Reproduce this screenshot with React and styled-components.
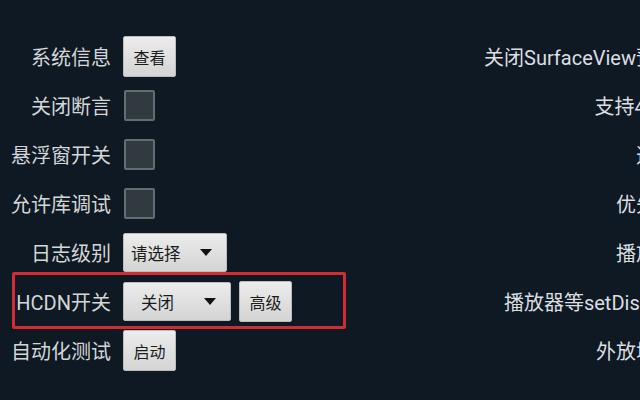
import React from "react";
import styled, { createGlobalStyle } from "styled-components";

const Global = createGlobalStyle`
  html, body { margin: 0; padding: 0; background: #0e1923; overflow: hidden; }
  body { font-family: Roboto, "Noto Sans CJK SC", sans-serif; }
`;

const Screen = styled.div`
  width: 640px;
  height: 400px;
  overflow: hidden;
  background: #0e1923;
`;

const Columns = styled.div`
  width: 696px;
  display: grid;
  grid-template-columns: 360px 1fr;
  padding-top: 32px;
`;

const Panel = styled.div`
  display: flex;
  flex-direction: column;
`;

const Row = styled.div`
  position: relative;
  height: 49px;
  display: flex;
  align-items: center;
  gap: 8px;
  ${(p) =>
    p.$highlight &&
    `
    &::after {
      content: "";
      position: absolute;
      left: 12px;
      top: -5px;
      width: 328px;
      height: 51px;
      border: 3px solid #d42a31;
      border-radius: 2px;
      pointer-events: none;
    }
  `}
`;

const Label = styled.span`
  width: 111px;
  margin-right: 4px;
  text-align: right;
  font-size: 20px;
  color: #d4d6d8;
  white-space: nowrap;
`;

const Button = styled.div`
  box-sizing: border-box;
  width: 53px;
  height: 41px;
  display: flex;
  align-items: center;
  justify-content: center;
  background: linear-gradient(#ececec, #d4d4d4);
  border: 1px solid #bcbcbc;
  border-radius: 2px;
  color: #1c1c1c;
  font-size: 16px;
`;

const Check = styled.div`
  box-sizing: border-box;
  width: 31px;
  height: 31px;
  margin-left: 1px;
  border: 2px solid #646b71;
  border-radius: 2px;
  background: #323a41;
`;

const Spinner = styled.div`
  box-sizing: border-box;
  width: ${(p) => p.$w}px;
  height: 39px;
  display: flex;
  align-items: center;
  justify-content: space-between;
  padding: 0 ${(p) => p.$pr}px 0 ${(p) => p.$pl}px;
  background: linear-gradient(#ececec, #d4d4d4);
  border: 1px solid #bcbcbc;
  border-radius: 2px;
  color: #1c1c1c;
  font-size: 16.5px;
`;

const Caret = styled.span`
  width: 0;
  height: 0;
  border-left: 6px solid transparent;
  border-right: 6px solid transparent;
  border-top: 7px solid #111;
`;

const RightText = styled.div`
  height: 49px;
  display: flex;
  align-items: center;
  justify-content: flex-end;
  font-size: 20px;
  color: #dcdee0;
  white-space: nowrap;
`;

const rightItems = [
  "关闭SurfaceView预渲染",
  "支持4k视频",
  "选择器",
  "优先使用",
  "播放内核",
  "播放器等setDisplay后",
  "外放增强器",
];

export default function App() {
  return (
    <Screen>
      <Global />
      <Columns>
        <Panel>
          <Row>
            <Label>系统信息</Label>
            <Button>查看</Button>
          </Row>
          <Row>
            <Label>关闭断言</Label>
            <Check />
          </Row>
          <Row>
            <Label>悬浮窗开关</Label>
            <Check />
          </Row>
          <Row>
            <Label>允许库调试</Label>
            <Check />
          </Row>
          <Row>
            <Label>日志级别</Label>
            <Spinner $w={104} $pl={7} $pr={14}>
              请选择
              <Caret />
            </Spinner>
          </Row>
          <Row $highlight>
            <Label>HCDN开关</Label>
            <Spinner $w={108} $pl={17} $pr={14}>
              关闭
              <Caret />
            </Spinner>
            <Button>高级</Button>
          </Row>
          <Row>
            <Label>自动化测试</Label>
            <Button>启动</Button>
          </Row>
        </Panel>
        <Panel>
          {rightItems.map((t) => (
            <RightText key={t}>{t}</RightText>
          ))}
        </Panel>
      </Columns>
    </Screen>
  );
}
